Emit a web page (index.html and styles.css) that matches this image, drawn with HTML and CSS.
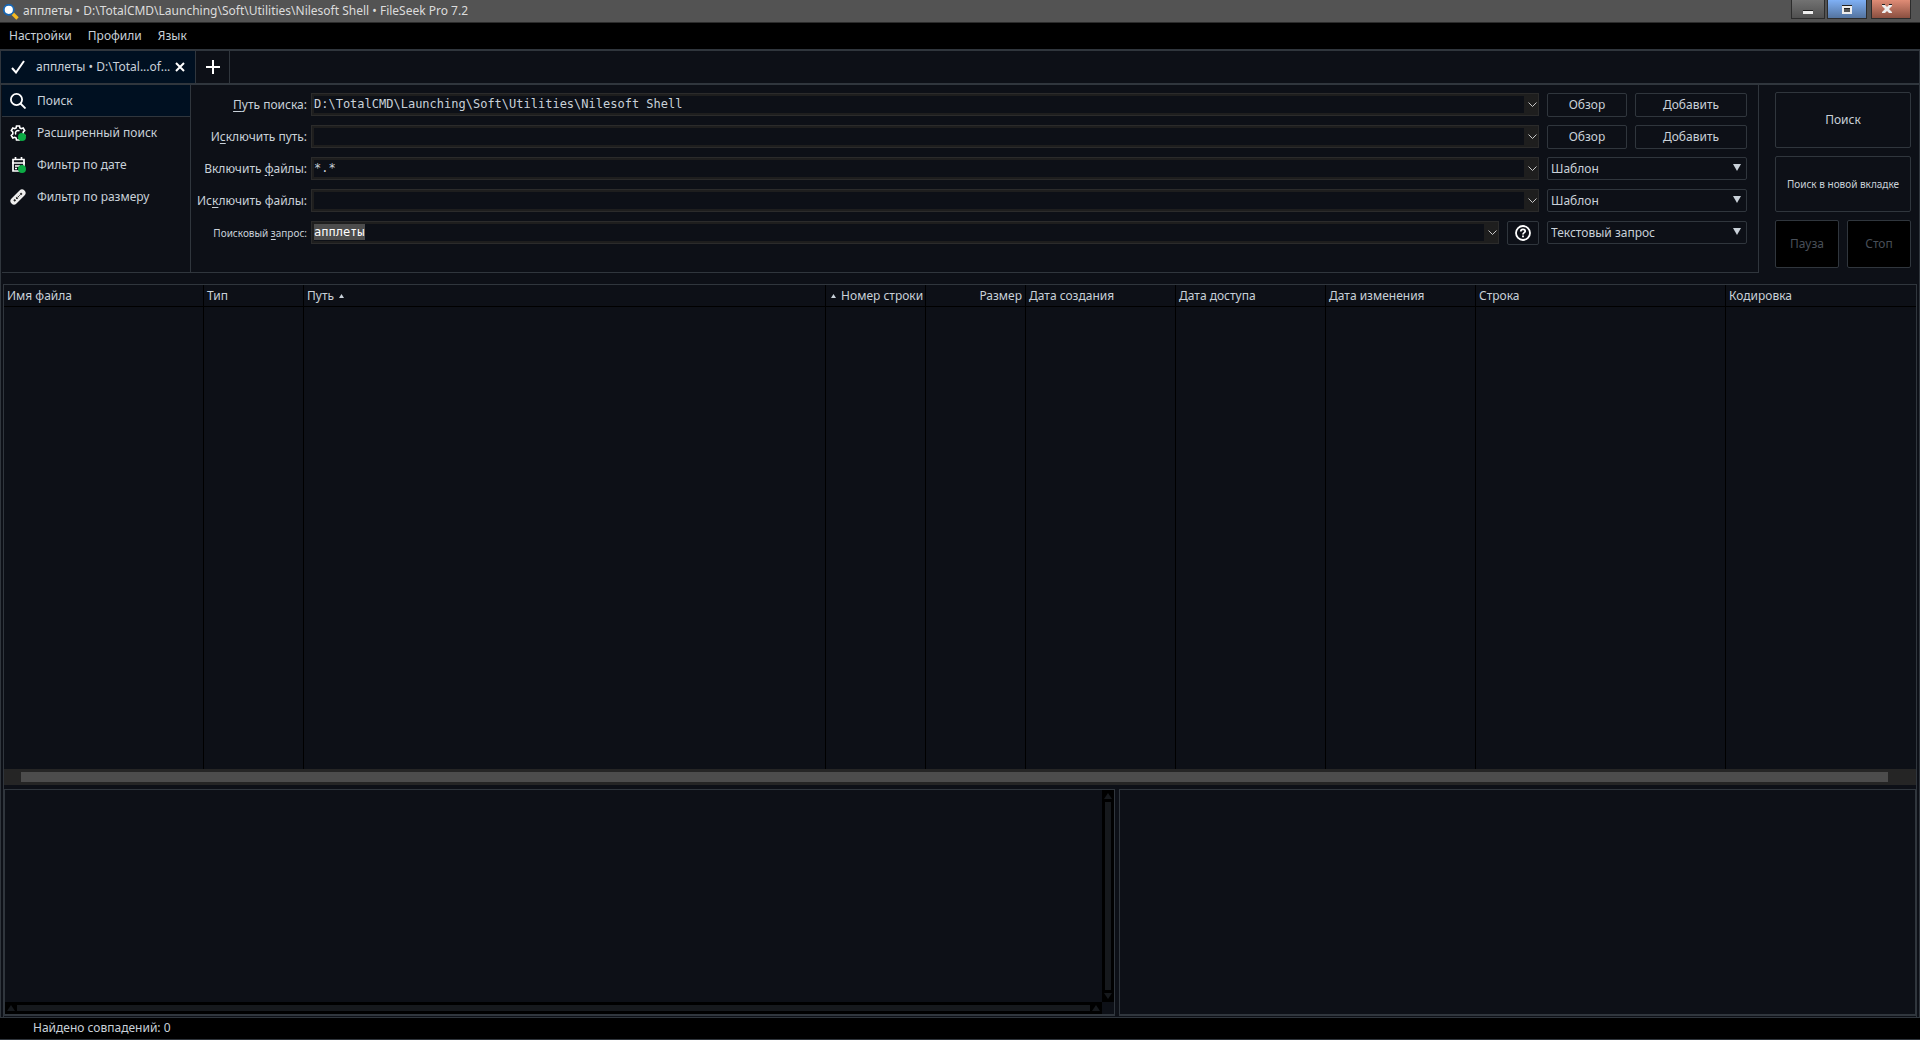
FILE: index.html
```html
<!DOCTYPE html>
<html lang="ru">
<head>
  <meta charset="UTF-8">
  <meta name="viewport" content="width=device-width, initial-scale=1.0">
  <title>апплеты • FileSeek Pro 7.2</title>
  <link rel="stylesheet" href="styles.css">
</head>
<body>

  <!-- TITLE BAR -->
  <header class="titlebar">
    <svg class="app-icon" width="16" height="16" viewBox="0 0 16 16">
      <path d="M9.5 9.5l5 5" stroke="#f5b921" stroke-width="3.4"/>
      <circle cx="5.8" cy="5.8" r="5" fill="#fff" stroke="#1767b5" stroke-width="1.8"/>
    </svg>
    <h1>апплеты • D:\TotalCMD\Launching\Soft\Utilities\Nilesoft Shell • FileSeek Pro 7.2</h1>
    <div class="window-buttons">
      <button class="win-btn minimize" aria-label="Свернуть">
        <svg width="10" height="5" viewBox="0 0 10 5"><path d="M0 0h10v1H0z" fill="#222"/><path d="M0 1h10v3H0z" fill="#eee"/></svg>
      </button>
      <button class="win-btn maximize" aria-label="Развернуть">
        <svg width="10" height="9" viewBox="0 0 10 9"><path d="M0 0h10v9H0z" fill="#eee"/><path d="M0 0h10v1H0z" fill="#222"/><path d="M2 3h6v4H2z" fill="#555"/><path d="M2 3h6v1H2z" fill="#222"/></svg>
      </button>
      <button class="win-btn close" aria-label="Закрыть">
        <svg width="10" height="10" viewBox="0 0 10 10"><path d="M0 1h3l2 2 2-2h3v1L7 5l3 3v1H7L5 7 3 9H0V8l3-3-3-3z" fill="#eee"/><path d="M0 0h3v1H0zM7 0h3v1H7z" fill="#222"/></svg>
      </button>
    </div>
  </header>

  <!-- MENU -->
  <nav class="menu">
    <a href="#">Настройки</a>
    <a href="#">Профили</a>
    <a href="#">Язык</a>
  </nav>

  <!-- TABS -->
  <div class="tabs">
    <div class="tab">
      <svg width="14" height="14" viewBox="0 0 14 14" fill="none" stroke="#fff" stroke-width="2"><path d="M1 8l4 4.500L13 1"/></svg>
      <a href="#">апплеты • D:\Total...of...</a>
      <button class="tab-close" aria-label="Закрыть вкладку">
        <svg width="10" height="10" viewBox="0 0 10 10" stroke="#fff" stroke-width="2"><path d="M1 1l8 8M9 1L1 9"/></svg>
      </button>
    </div>
    <button class="tab-add" aria-label="Новая вкладка">
      <svg width="14" height="14" viewBox="0 0 14 14" stroke="#fff" stroke-width="2"><path d="M7 0v14M0 7h14"/></svg>
    </button>
  </div>

  <main class="window">
    <!-- SEARCH PANEL -->
    <section class="search-area">
      <nav class="sidebar">
        <a href="#" class="active">
          <svg width="16" height="16" viewBox="0 0 16 16" fill="none" stroke="#fff" stroke-width="1.8"><circle cx="6.500" cy="6.500" r="5.600"/><path d="M10.500 10.500l5 5"/></svg>
          Поиск
        </a>
        <a href="#">
          <svg width="16" height="16" viewBox="0 0 16 16" fill="none">
            <path d="M6.500 1h3l.4 2 1.300.7 2-.7 1.500 2.600-1.500 1.400v2l1.500 1.400-1.500 2.600-2-.7-1.300.7-.4 2h-3l-.4-2-1.300-.7-2 .7L1.300 10.400 2.800 9V7L1.300 5.600 2.800 3l2 .7 1.300-.7z" stroke="#fff" stroke-width="1.600"/>
            <path d="M9.500 6A2.500 2.500 0 0 0 6 9.500" stroke="#fff" stroke-width="1.400"/>
            <circle cx="12" cy="12" r="4" fill="#0cab45"/>
          </svg>
          Расширенный поиск
        </a>
        <a href="#">
          <svg width="16" height="16" viewBox="0 0 16 16" fill="none">
            <path d="M3 2.500h11V14H3zM2 6h13M5.500 0v3M11.500 0v3" stroke="#fff" stroke-width="1.700"/>
            <path d="M5 9h5M5 11.500h2" stroke="#fff" stroke-width="1.400"/>
            <circle cx="12" cy="12" r="4" fill="#0cab45"/>
          </svg>
          Фильтр по дате
        </a>
        <a href="#">
          <svg width="16" height="16" viewBox="0 0 16 16" fill="none">
            <path d="M4 12l8-8" stroke="#eee" stroke-width="7" stroke-linecap="round"/>
            <path d="M4 12l8-8" stroke="#222" stroke-width="2" stroke-dasharray="2 1"/>
            <path d="M5 9l3 3M8 6l3 3" stroke="#eee"/>
          </svg>
          Фильтр по размеру
        </a>
      </nav>

      <form class="fields">
        <div class="row">
          <label for="path"><u>П</u>уть поиска:</label>
          <div class="combo">
            <input type="text" id="path" value="D:\TotalCMD\Launching\Soft\Utilities\Nilesoft Shell">
            <button type="button" aria-label="Список"><svg width="9" height="6" viewBox="0 0 9 6"><path d="M.5.5l4 4 4-4"/></svg></button>
          </div>
          <div class="actions">
            <button type="button" class="btn browse">Обзор</button>
            <button type="button" class="btn add">Добавить</button>
          </div>
        </div>
        <div class="row">
          <label for="exclude-path">И<u>с</u>ключить путь:</label>
          <div class="combo">
            <input type="text" id="exclude-path">
            <button type="button" aria-label="Список"><svg width="9" height="6" viewBox="0 0 9 6"><path d="M.5.5l4 4 4-4"/></svg></button>
          </div>
          <div class="actions">
            <button type="button" class="btn browse">Обзор</button>
            <button type="button" class="btn add">Добавить</button>
          </div>
        </div>
        <div class="row">
          <label for="include-files">Включить <u>ф</u>айлы:</label>
          <div class="combo">
            <input type="text" id="include-files" value="*.*">
            <button type="button" aria-label="Список"><svg width="9" height="6" viewBox="0 0 9 6"><path d="M.5.5l4 4 4-4"/></svg></button>
          </div>
          <div class="actions select">
            <select aria-label="Тип включения"><option>Шаблон</option></select>
            <svg width="8" height="7" viewBox="0 0 8 7"><path d="M0 0h8L4 7z"/></svg>
          </div>
        </div>
        <div class="row">
          <label for="exclude-files">Ис<u>к</u>лючить файлы:</label>
          <div class="combo">
            <input type="text" id="exclude-files">
            <button type="button" aria-label="Список"><svg width="9" height="6" viewBox="0 0 9 6"><path d="M.5.5l4 4 4-4"/></svg></button>
          </div>
          <div class="actions select">
            <select aria-label="Тип исключения"><option>Шаблон</option></select>
            <svg width="8" height="7" viewBox="0 0 8 7"><path d="M0 0h8L4 7z"/></svg>
          </div>
        </div>
        <div class="row">
          <label for="query" class="small">Поисковый <u>з</u>апрос:</label>
          <div class="combo">
            <input type="text" id="query" value="апплеты">
            <button type="button" aria-label="Список"><svg width="9" height="6" viewBox="0 0 9 6"><path d="M.5.5l4 4 4-4"/></svg></button>
          </div>
          <button type="button" class="btn help" aria-label="Справка">
            <svg width="16" height="16" viewBox="0 0 16 16" fill="none" stroke="#fff" stroke-width="1.800"><circle cx="8" cy="8" r="7"/><path d="M5.800 6.500c0-3 4.400-2.800 4.400-.3C10.200 7.700 8 7.600 8 9.500M8 10.500v1.700"/></svg>
          </button>
          <div class="actions select">
            <select aria-label="Тип запроса"><option>Текстовый запрос</option></select>
            <svg width="8" height="7" viewBox="0 0 8 7"><path d="M0 0h8L4 7z"/></svg>
          </div>
        </div>
      </form>

      <div class="commands">
        <button class="btn">Поиск</button>
        <button class="btn small">Поиск в новой вкладке</button>
        <button class="btn" disabled>Пауза</button>
        <button class="btn" disabled>Стоп</button>
      </div>
    </section>

    <!-- RESULTS -->
    <section class="results">
      <table>
        <colgroup>
          <col class="w200"><col class="w100"><col><col class="w100"><col class="w100">
          <col class="w150"><col class="w150"><col class="w150"><col class="w250"><col class="w190">
        </colgroup>
        <thead>
          <tr>
            <th>Имя файла</th>
            <th>Тип</th>
            <th>Путь <svg class="sort" width="5" height="4" viewBox="0 0 5 4"><path d="M0 4h5L2.500 0z"/></svg></th>
            <th class="right"><svg class="sort" width="5" height="4" viewBox="0 0 5 4"><path d="M0 4h5L2.500 0z"/></svg> Номер строки</th>
            <th class="right">Размер</th>
            <th>Дата создания</th>
            <th>Дата доступа</th>
            <th>Дата изменения</th>
            <th>Строка</th>
            <th>Кодировка</th>
          </tr>
        </thead>
        <tbody>
          <tr><td></td><td></td><td></td><td></td><td></td><td></td><td></td><td></td><td></td><td></td></tr>
        </tbody>
      </table>
      <div class="scrollbar"><div class="thumb"></div></div>
    </section>

    <!-- PREVIEW -->
    <section class="preview">
      <div class="pane pane-text">
        <div class="vscroll">
          <svg width="8" height="6" viewBox="0 0 8 6"><path d="M0 6h8L4 0z"/></svg>
          <div class="bar"></div>
          <svg width="8" height="6" viewBox="0 0 8 6"><path d="M0 0h8L4 6z"/></svg>
        </div>
        <div class="hscroll">
          <svg width="8" height="6" viewBox="0 0 8 6"><path d="M0 6h8L4 0z"/></svg>
          <div class="bar"></div>
          <svg width="8" height="6" viewBox="0 0 8 6"><path d="M0 6h8L4 0z"/></svg>
        </div>
      </div>
      <div class="pane"></div>
    </section>
  </main>

  <!-- STATUS BAR -->
  <footer class="status">Найдено совпадений: 0</footer>

  <script>
    // start with the query selected, ready to be typed over
    const query = document.getElementById("query");
    query.focus();
    query.select();
  </script>
</body>
</html>
```
FILE: styles.css
```css
/* ===== GENERAL ===== */
* {
  box-sizing: border-box;
}
body {
  margin: 0;
  min-height: 100vh;
  display: flex;
  flex-direction: column;
  background: #0d1017;
  color: #c9d1d9;
  font: 12px/16px "Noto Sans", "Open Sans", sans-serif;
}
a {
  color: inherit;
  text-decoration: none;
}
button, input, select {
  margin: 0;
  padding: 0;
  border: none;
  border-radius: 0;
  background: none;
  color: inherit;
  font: inherit;
}
svg {
  display: block;
  flex: none;
}

/* ===== TITLE BAR ===== */
.titlebar {
  display: flex;
  height: 23px;
  padding: 0 9px 0 3px;
  background: #535353;
  border-bottom: 1px solid #2c2c2c;
}
.app-icon {
  margin-top: 4px;
}
.titlebar h1 {
  flex: 1;
  margin: 0 0 0 4px;
  font-size: 12px;
  font-weight: normal;
  line-height: 22px;
  color: #dcdcdc;
}
.window-buttons {
  display: flex;
  gap: 2px;
}
.win-btn {
  display: flex;
  align-items: center;
  justify-content: center;
  height: 19px;
  border: 1px solid #2c2c2c;
  border-top: none;
}
.minimize {
  width: 34px;
  padding-top: 6px;
  background: linear-gradient(#727272, #505050);
}
.maximize {
  width: 40px;
  background: linear-gradient(#7fb0f5, #54749f);
}
.close {
  width: 40px;
  margin-left: 2px;
  padding-right: 8px;
  background: linear-gradient(#df8c76, #8a4f40);
}

/* ===== MENU ===== */
.menu {
  display: flex;
  gap: 16px;
  height: 26px;
  padding: 5px 9px;
  background: #000;
}

/* ===== TABS ===== */
.tabs {
  display: flex;
  height: 36px;
  border: solid #30363d;
  border-width: 2px 1px;
}
.tab {
  display: flex;
  align-items: center;
  width: 195px;
  padding: 0 10px;
  background: #001021;
  border-right: 1px solid #30363d;
}
.tab a {
  flex: 1;
  margin-left: 11px;
  white-space: nowrap;
}
.tab-add {
  display: flex;
  align-items: center;
  justify-content: center;
  width: 34px;
  border-right: 1px solid #30363d;
}

/* ===== SEARCH PANEL ===== */
.window {
  flex: 1;
  display: flex;
  flex-direction: column;
  padding: 0 2px;
  border: solid #30363d;
  border-width: 0 1px 1px;
}
.search-area {
  display: flex;
  height: 188px;
  margin: 0 6px 11px -1px;
}
.sidebar {
  width: 189px;
  border: solid #30363d;
  border-width: 0 1px 1px 0;
}
.sidebar a {
  display: flex;
  align-items: center;
  gap: 11px;
  height: 32px;
  padding: 0 8px;
}
.sidebar .active {
  background: #001021;
  border-bottom: 1px solid #30363d;
}
.fields {
  flex: 1;
  display: flex;
  flex-direction: column;
  gap: 8px;
  padding: 8px 11px 8px 4px;
  border: solid #30363d;
  border-width: 0 1px 1px 0;
}
.row {
  display: flex;
  gap: 8px;
  height: 24px;
}
.row label {
  width: 112px;
  margin-right: -4px;
  text-align: right;
  line-height: 24px;
  white-space: nowrap;
}
.row label.small,
.btn.small {
  font-size: 10px;
}
.row u {
  text-underline-offset: 2px;
}
.combo {
  flex: 1;
  display: flex;
  height: 23px;
  padding: 2px 0 2px 2px;
  background: #1e1e1e;
  border: 1px solid #2b2b2b;
}
.combo input {
  flex: 1;
  min-width: 0;
  padding-bottom: 2px;
  background: #0d1017;
  font: 12px/16px "DejaVu Sans Mono", monospace;
  outline: none;
}
.combo input::selection {
  background: #4d4d4d;
  color: #fff;
}
.combo button {
  display: flex;
  align-items: center;
  justify-content: flex-end;
  width: 14px;
  padding-right: 1px;
}
.combo svg {
  fill: none;
  stroke: #c8c8c8;
}
.actions {
  display: flex;
  gap: 8px;
  width: 200px;
}
.btn {
  display: flex;
  align-items: center;
  justify-content: center;
  border: 1px solid #30363d;
  border-radius: 2px;
}
.browse {
  width: 80px;
}
.add {
  flex: 1;
}
.help {
  width: 32px;
}
.select {
  position: relative;
  height: 23px;
}
.select select {
  width: 100%;
  padding: 0 3px;
  appearance: none;
  background: #0d1017;
  border: 1px solid #30363d;
  border-radius: 2px;
}
.select svg {
  position: absolute;
  top: 7px;
  right: 6px;
  fill: #c9d1d9;
  pointer-events: none;
}

/* ===== COMMAND BUTTONS ===== */
.commands {
  display: grid;
  grid-template-columns: 64px 64px;
  grid-template-rows: 56px 56px 48px;
  gap: 8px;
  padding: 7px 0 0 16px;
}
.commands .btn:nth-child(-n+2) {
  grid-column: span 2;
}
.commands .btn:disabled {
  background: #000;
  color: #484f58;
}

/* ===== RESULTS ===== */
.results {
  flex: 1;
  display: flex;
  flex-direction: column;
  border: solid #30363d;
  border-width: 1px 1px 0;
}
.results table {
  flex: 1;
  width: 100%;
  table-layout: fixed;
  border-collapse: separate;
  border-spacing: 0;
}
.w100 { width: 100px; }
.w150 { width: 150px; }
.w190 { width: 190px; }
.w200 { width: 200px; }
.w250 { width: 250px; }
.results th, .results td {
  border-right: 1px solid #000;
}
.results th:last-child, .results td:last-child {
  border-right: none;
}
.results th {
  height: 22px;
  padding: 0 3px;
  border-bottom: 1px solid #000;
  font-weight: normal;
  text-align: left;
  white-space: nowrap;
}
.results th.right {
  text-align: right;
}
.sort {
  display: inline-block;
  margin: 0 2px;
  vertical-align: 2px;
  fill: #c9d1d9;
}
.scrollbar {
  height: 16px;
  padding: 3px 28px 3px 17px;
  background: #252525;
}
.thumb {
  height: 10px;
  background: #4c4c4c;
}

/* ===== PREVIEW ===== */
.preview {
  display: grid;
  grid-template-columns: 1111fr 797fr;
  gap: 4px;
  height: 232px;
  padding: 4px 0 1px;
  border: solid #30363d;
  border-width: 0 1px;
}
.pane {
  border: 1px solid #30363d;
  border-bottom-width: 2px;
}
.pane-text {
  display: grid;
  grid-template-columns: 1fr 12px;
  grid-template-rows: 1fr 12px;
}
.vscroll, .hscroll {
  display: flex;
  align-items: center;
  gap: 3px;
  padding: 3px;
  background: #000;
  fill: #16191d;
}
.vscroll {
  flex-direction: column;
  grid-column: 2;
}
.bar {
  flex: 1;
  align-self: stretch;
  background: #16191d;
}
.vscroll svg, .hscroll svg {
  margin: 0 -1px;
}

/* ===== STATUS BAR ===== */
.status {
  height: 22px;
  padding: 2px 33px;
  background: #000;
  border-bottom: 1px solid #30363d;
}
```
